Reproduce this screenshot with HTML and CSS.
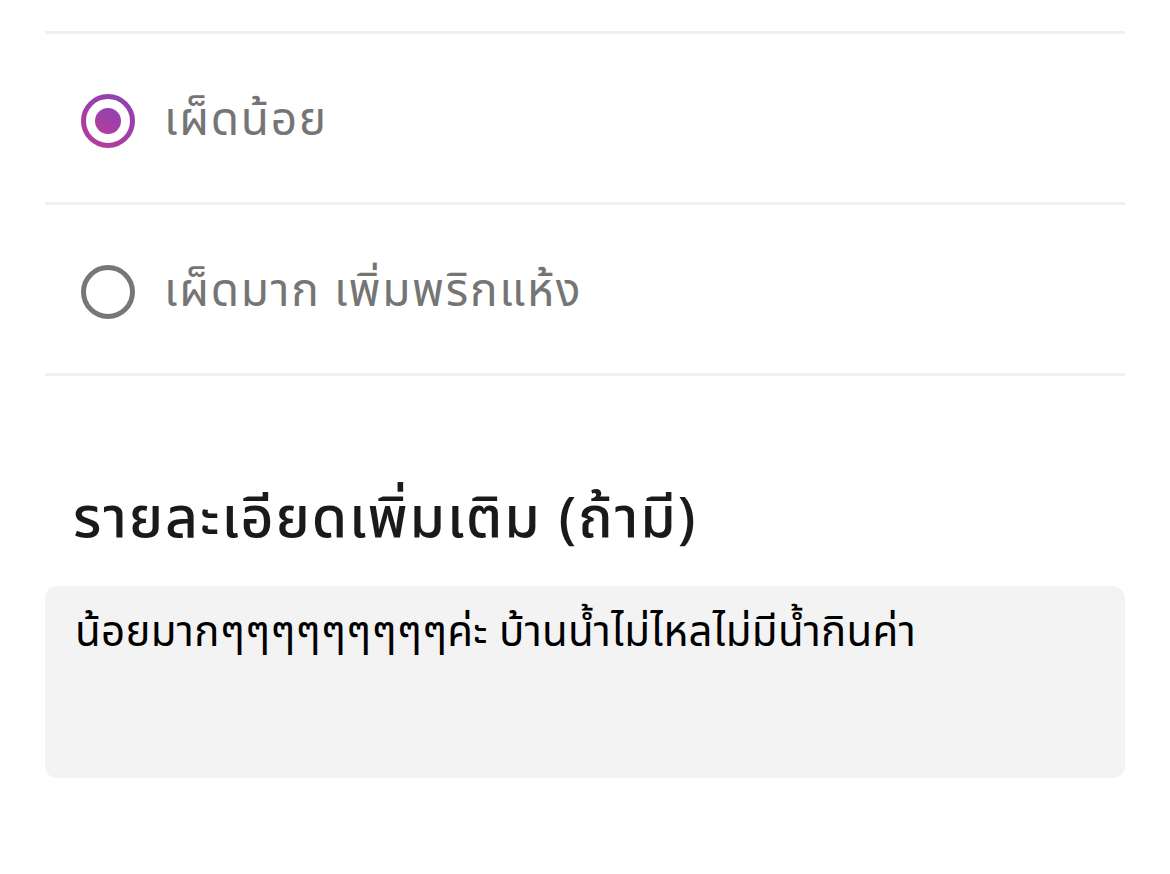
FILE: index.html
```html
<!DOCTYPE html>
<html lang="th">
<head>
<meta charset="utf-8">
<link rel="stylesheet" href="styles.css">
</head>
<body>
<div class="page">
  <div class="options">
    <div class="option">
      <svg class="radio" viewBox="0 0 54 54" width="54" height="54" aria-hidden="true">
        <defs>
          <linearGradient id="rg" x1="0.8" y1="0" x2="0.2" y2="1">
            <stop offset="0" stop-color="#8f42b2"/>
            <stop offset="1" stop-color="#b53c9c"/>
          </linearGradient>
        </defs>
        <circle cx="27" cy="27" r="24.5" fill="none" stroke="url(#rg)" stroke-width="5"/>
        <circle cx="27" cy="27" r="13" fill="url(#rg)"/>
      </svg>
      <span class="option__label">เผ็ดน้อย</span>
    </div>
    <div class="option">
      <svg class="radio" viewBox="0 0 54 54" width="54" height="54" aria-hidden="true">
        <circle cx="27" cy="27" r="24.5" fill="none" stroke="#777777" stroke-width="5"/>
      </svg>
      <span class="option__label">เผ็ดมาก เพิ่มพริกแห้ง</span>
    </div>
  </div>
  <h2 class="section-title">รายละเอียดเพิ่มเติม (ถ้ามี)</h2>
  <div class="note">น้อยมากๆๆๆๆๆๆๆๆๆค่ะ บ้านน้ำไม่ไหลไม่มีน้ำกินค่า</div>
</div>
</body>
</html>
```
FILE: styles.css
```css
html, body {
  margin: 0;
  padding: 0;
  background: #ffffff;
}
body {
  font-family: "Noto Sans Thai", "Noto Sans", "DejaVu Sans", sans-serif;
}
.page {
  width: 1080px;
  margin-left: 45px;
  padding-top: 31px;
}
.options {
  border-top: 3px solid #f0f0f0;
}
.option {
  height: 163px;
  padding-top: 5px;
  display: flex;
  align-items: center;
  border-bottom: 3px solid #f0f0f0;
  padding-left: 36px;
  gap: 29px;
}
.radio {
  flex: none;
  display: block;
}
.option__label {
  font-size: 46px;
  letter-spacing: 1.7px;
  line-height: 60px;
  color: #757575;
}
.section-title {
  margin: 112px 0 0 28px;
  font-size: 57px;
  font-weight: 500;
  letter-spacing: 1.9px;
  color: #1a1a1a;
  line-height: 64px;
}
.note {
  margin-top: 34px;
  height: 192px;
  box-sizing: border-box;
  background: #f3f3f3;
  border-radius: 12px;
  padding: 19px 30px;
  font-size: 42px;
  letter-spacing: 0.3px;
  line-height: 56px;
  color: #000000;
}
```
